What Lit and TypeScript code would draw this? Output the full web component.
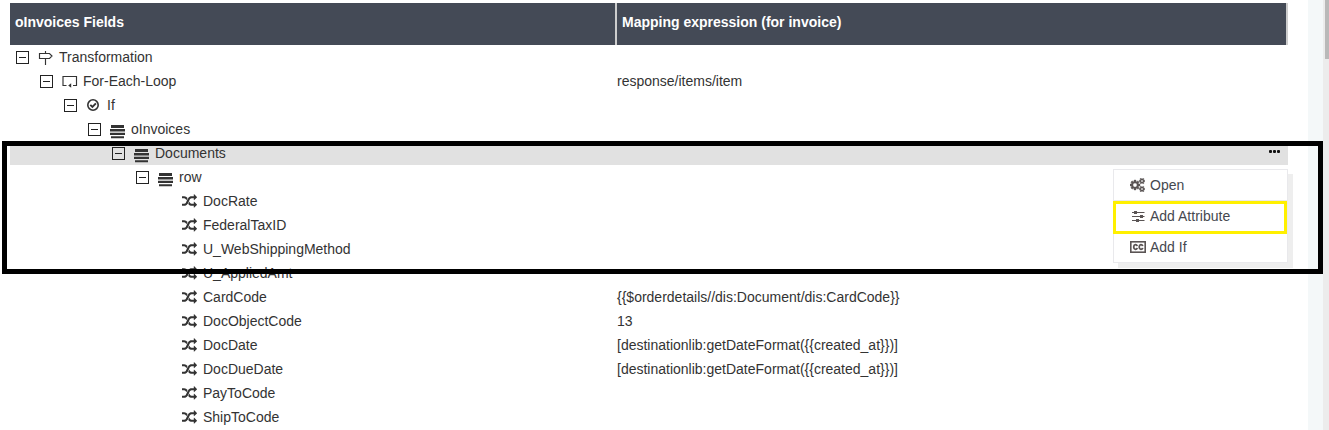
import { LitElement, html, css, svg, nothing } from "lit";
import { customElement } from "lit/decorators.js";

type Kind = "sign" | "loop" | "check" | "bars" | "random" | "cogs" | "sliders" | "cc";

interface Row {
  level: number;
  icon: Kind;
  label: string;
  expr?: string;
  active?: boolean;
}

const shapes: Record<Kind, [number, number, string, unknown]> = {
  sign: [16, 16, "0 0 16 16", svg`<path d="M1.5 4.5H11.5L14 7L11.5 9.5H1.5ZM7.5 2V4.5M7.5 9.5V16" fill="none" stroke="currentColor" stroke-width="1.15"/>`],
  loop: [16, 16, "0 0 16 16", svg`<path d="M4.5 12.5H1V3.5H14.5V12.5H11" fill="none" stroke="currentColor" stroke-width="1.15"/><path d="M6.2 12.5L9.2 10.2V14.8Z" fill="currentColor"/>`],
  check: [14, 14, "0 0 14 14", svg`<g fill="none" stroke="currentColor"><circle cx="7" cy="7" r="5.2" stroke-width="1.6"/><path d="M4.3 6.8L6.4 8.9L9.9 5.3" stroke-width="1.9"/></g>`],
  bars: [15, 14, "0 0 15 14", svg`<path d="M1 0H14V3H1ZM0 4H15V6.5H0ZM0 7.7H15V10H0ZM1 11.3H14V13.2H1Z" fill="currentColor"/>`],
  random: [15, 15, "0 0 1792 1792", svg`<path fill="currentColor" d="M666 481q-60 92-137 273-22-45-37-72.5t-40.5-63.5-51-56.5-63-35-81.5-14.5h-224q-14 0-23-9t-9-23v-192q0-14 9-23t23-9h224q250 0 410 225zm1126 799q0 14-9 23l-320 320q-9 9-23 9-13 0-22.5-9.5t-9.5-22.5v-192q-32 0-85 .5t-81 1-73-1-71-5-64-10.5-63-18.5-58-28.5-59-40-55-53.5-56-69.5q59-93 136-273 22 45 37 72.5t40.5 63.5 51 56.5 63 35 81.5 14.5h256v-192q0-14 9-23t23-9q12 0 24 10l319 319q9 9 9 23zm0-896q0 14-9 23l-320 320q-9 9-23 9-13 0-22.5-9.5t-9.5-22.5v-192h-256q-48 0-87 15t-69 45-51 61.5-45 77.5q-32 62-78 171-29 66-49.5 111t-54 105-64 100-74 83-90 68.5-106.5 42-128 16.5h-224q-14 0-23-9t-9-23v-192q0-14 9-23t23-9h224q48 0 87-15t69-45 51-61.5 45-77.5q32-62 78-171 29-66 49.5-111t54-105 64-100 74-83 90-68.5 106.5-42 128-16.5h256v-192q0-14 9-23t23-9q12 0 24 10l319 319q9 9 9 23z"/>`],
  cogs: [15, 14, "0 0 1920 1792", svg`<path fill="currentColor" stroke="currentColor" stroke-width="50" d="M896 896q0-106-75-181t-181-75-181 75-75 181 75 181 181 75 181-75 75-181zm768 512q0-52-38-90t-90-38-90 38-38 90q0 53 37.5 90.5t90.5 37.5 90.5-37.5 37.5-90.5zm0-1024q0-52-38-90t-90-38-90 38-38 90q0 53 37.5 90.5t90.5 37.5 90.5-37.5 37.5-90.5zm-384 421v185q0 10-7 19.5t-16 10.5l-155 24q-11 35-32 76 34 48 90 115 7 11 7 20 0 12-7 19-23 30-82.5 89.5t-78.5 59.5q-11 0-21-7l-115-90q-37 19-77 31-11 108-23 155-7 24-30 24h-186q-11 0-20-7.5t-10-17.5l-23-153q-34-10-75-31l-118 89q-7 7-20 7-11 0-21-8-144-133-144-160 0-9 7-19 10-14 41-53t47-61q-23-44-35-82l-152-24q-10-1-17-9.5t-7-19.5v-185q0-10 7-19.5t16-10.5l155-24q11-35 32-76-34-48-90-115-7-11-7-20 0-12 7-20 22-30 82-89t79-59q11 0 21 7l115 90q34-18 77-32 11-108 23-154 7-24 30-24h186q11 0 20 7.5t10 17.5l23 153q34 10 75 31l118-89q8-7 20-7 11 0 21 8 144 133 144 160 0 8-7 19-12 16-42 54t-45 60q23 48 34 82l152 23q10 2 17 10.5t7 19.5zm640 533v140q0 16-149 31-12 27-30 52 51 113 51 138 0 4-4 7-122 71-124 71-8 0-46-47t-52-68q-20 2-30 2t-30-2q-14 21-52 68t-46 47q-2 0-124-71-4-3-4-7 0-25 51-138-18-25-30-52-149-15-149-31v-140q0-16 149-31 13-29 30-52-51-113-51-138 0-4 4-7 4-2 35-20t59-34 30-16q8 0 46 46.5t52 67.5q20-2 30-2t30 2q51-71 92-112l6-2q4 0 124 70 4 3 4 7 0 25-51 138 17 23 30 52 149 15 149 31zm0-1024v140q0 16-149 31-12 27-30 52 51 113 51 138 0 4-4 7-122 71-124 71-8 0-46-47t-52-68q-20 2-30 2t-30-2q-14 21-52 68t-46 47q-2 0-124-71-4-3-4-7 0-25 51-138-18-25-30-52-149-15-149-31v-140q0-16 149-31 13-29 30-52-51-113-51-138 0-4 4-7 4-2 35-20t59-34 30-16q8 0 46 46.5t52 67.5q20-2 30-2t30 2q51-71 92-112l6-2q4 0 124 70 4 3 4 7 0 25-51 138 17 23 30 52 149 15 149 31z"/>`],
  sliders: [13, 14, "0 0 13 14", svg`<path d="M0 3.5H12.5M0 7.5H12.5M0 11.5H12.5" stroke="currentColor" stroke-width="1.2"/><path d="M2 2H5V5H2ZM8 6H11V9H8ZM4 10H7V13H4Z" fill="currentColor"/>`],
  cc: [16, 14, "0 0 16 14", svg`<g fill="none" stroke="currentColor"><rect x=".8" y="1.8" width="14.4" height="10.4" stroke-width="1.6"/><path d="M7.1 6.1C6.9 4.1 3.7 4.1 3.7 7S6.9 9.9 7.1 7.9M12.6 6.1C12.4 4.1 9.2 4.1 9.2 7S12.4 9.9 12.6 7.9" stroke-width="1.8"/></g>`],
};

const icon = (k: Kind) => {
  const [w, h, box, body] = shapes[k];
  return html`<svg class="ico ${k}" width=${w} height=${h} viewBox=${box}>${body}</svg>`;
};

const created = "[destinationlib:getDateFormat({{created_at}})]";

const rows: Row[] = [
  { level: 0, icon: "sign", label: "Transformation" },
  { level: 1, icon: "loop", label: "For-Each-Loop", expr: "response/items/item" },
  { level: 2, icon: "check", label: "If" },
  { level: 3, icon: "bars", label: "oInvoices" },
  { level: 4, icon: "bars", label: "Documents", active: true },
  { level: 5, icon: "bars", label: "row" },
  { level: 6, icon: "random", label: "DocRate" },
  { level: 6, icon: "random", label: "FederalTaxID" },
  { level: 6, icon: "random", label: "U_WebShippingMethod" },
  { level: 6, icon: "random", label: "U_AppliedAmt" },
  { level: 6, icon: "random", label: "CardCode", expr: "{{$orderdetails//dis:Document/dis:CardCode}}" },
  { level: 6, icon: "random", label: "DocObjectCode", expr: "13" },
  { level: 6, icon: "random", label: "DocDate", expr: created },
  { level: 6, icon: "random", label: "DocDueDate", expr: created },
  { level: 6, icon: "random", label: "PayToCode" },
  { level: 6, icon: "random", label: "ShipToCode" },
];

@customElement("app-root")
export class AppRoot extends LitElement {
  static styles = css`
    :host { display: block; position: relative; height: 430px; overflow: hidden; background: #fff;
      font: 14px/24px "Liberation Sans", Arial, sans-serif; color: #333; }
    * { box-sizing: border-box; }
    svg { display: block; flex: none; }
    .page { display: flex; height: 430px; }
    .content { width: 1308px; padding: 3px 20px 0 10px; }
    .gutter { width: 15px; background: #f4f8f9; }
    .scroll { width: 6px; padding-left: 2px; background: #ececec; }
    .thumb { height: 59px; background: #b9b9b9; }
    .head, .row { display: grid; grid-template-columns: 607px 1fr; width: 1278px; }
    .head { height: 42px; background: #444a56; color: #fff; font-weight: 700; line-height: 38px; }
    .head div { border-right: 2px solid #cdcdcd; padding-left: 5px; }
    .row { height: 24px; white-space: nowrap; }
    .active { background: #e1e1e1; grid-template-columns: 607px 1fr auto; }
    .node { display: flex; align-items: center; }
    .toggle { width: 13px; height: 13px; border: 1px solid #222; display: flex; align-items: center; justify-content: center; flex: none; }
    .toggle::before { content: ""; width: 7px; height: 1px; background: #222; }
    .leaf { width: 13px; }
    .slot { width: 30px; padding-left: 9px; flex: none; }
    .bars { margin-top: 5px; margin-bottom: -1px; }
    .random { margin-top: 1px; }
    .dots { display: flex; gap: 1px; padding: 9px 8px 0 0; }
    .dots i { width: 3px; height: 3px; background: #111; border-radius: 1px; }
    .menu { position: absolute; left: 1113px; top: 169px; width: 175px; height: 94px; background: #fff;
      border: 1px solid #e9e9ec; box-shadow: 5px 5px 0 #eee; color: #45484f; }
    .item { height: 31px; display: flex; align-items: center; border-bottom: 1px solid #e9e9ec; padding-left: 16px; }
    .item:last-child { border: 0; height: 30px; }
    .item .slot { width: 20px; padding: 0; display: flex; color: #5a5454; }
    .item .sliders { margin-left: 2px; }
    .pick { position: absolute; left: 1113px; top: 201px; width: 174px; height: 33px; border: 3px solid #fff000; }
    .frame { position: absolute; left: 2px; top: 141px; width: 1321px; height: 133px; border: 5px solid #000; }
  `;

  render() {
    return html`
      <div class="page">
        <div class="content">
          <div class="head"><div>oInvoices Fields</div><div>Mapping expression (for invoice)</div></div>
          ${rows.map((r) => html`
            <div class="row ${r.active ? "active" : ""}">
              <div class="node" style="padding-left:${6 + r.level * 24}px">
                <span class=${r.level < 6 ? "toggle" : "leaf"}></span>
                <span class="slot">${icon(r.icon)}</span>
                <span>${r.label}</span>
              </div>
              <div>${r.expr ?? nothing}</div>
              ${r.active ? html`<div class="dots"><i></i><i></i><i></i></div>` : nothing}
            </div>`)}
        </div>
        <div class="gutter"></div>
        <div class="scroll"><div class="thumb"></div></div>
      </div>
      <div class="menu">
        <div class="item"><span class="slot">${icon("cogs")}</span>Open</div>
        <div class="item"><span class="slot">${icon("sliders")}</span>Add Attribute</div>
        <div class="item"><span class="slot">${icon("cc")}</span>Add If</div>
      </div>
      <div class="pick"></div>
      <div class="frame"></div>
    `;
  }
}
